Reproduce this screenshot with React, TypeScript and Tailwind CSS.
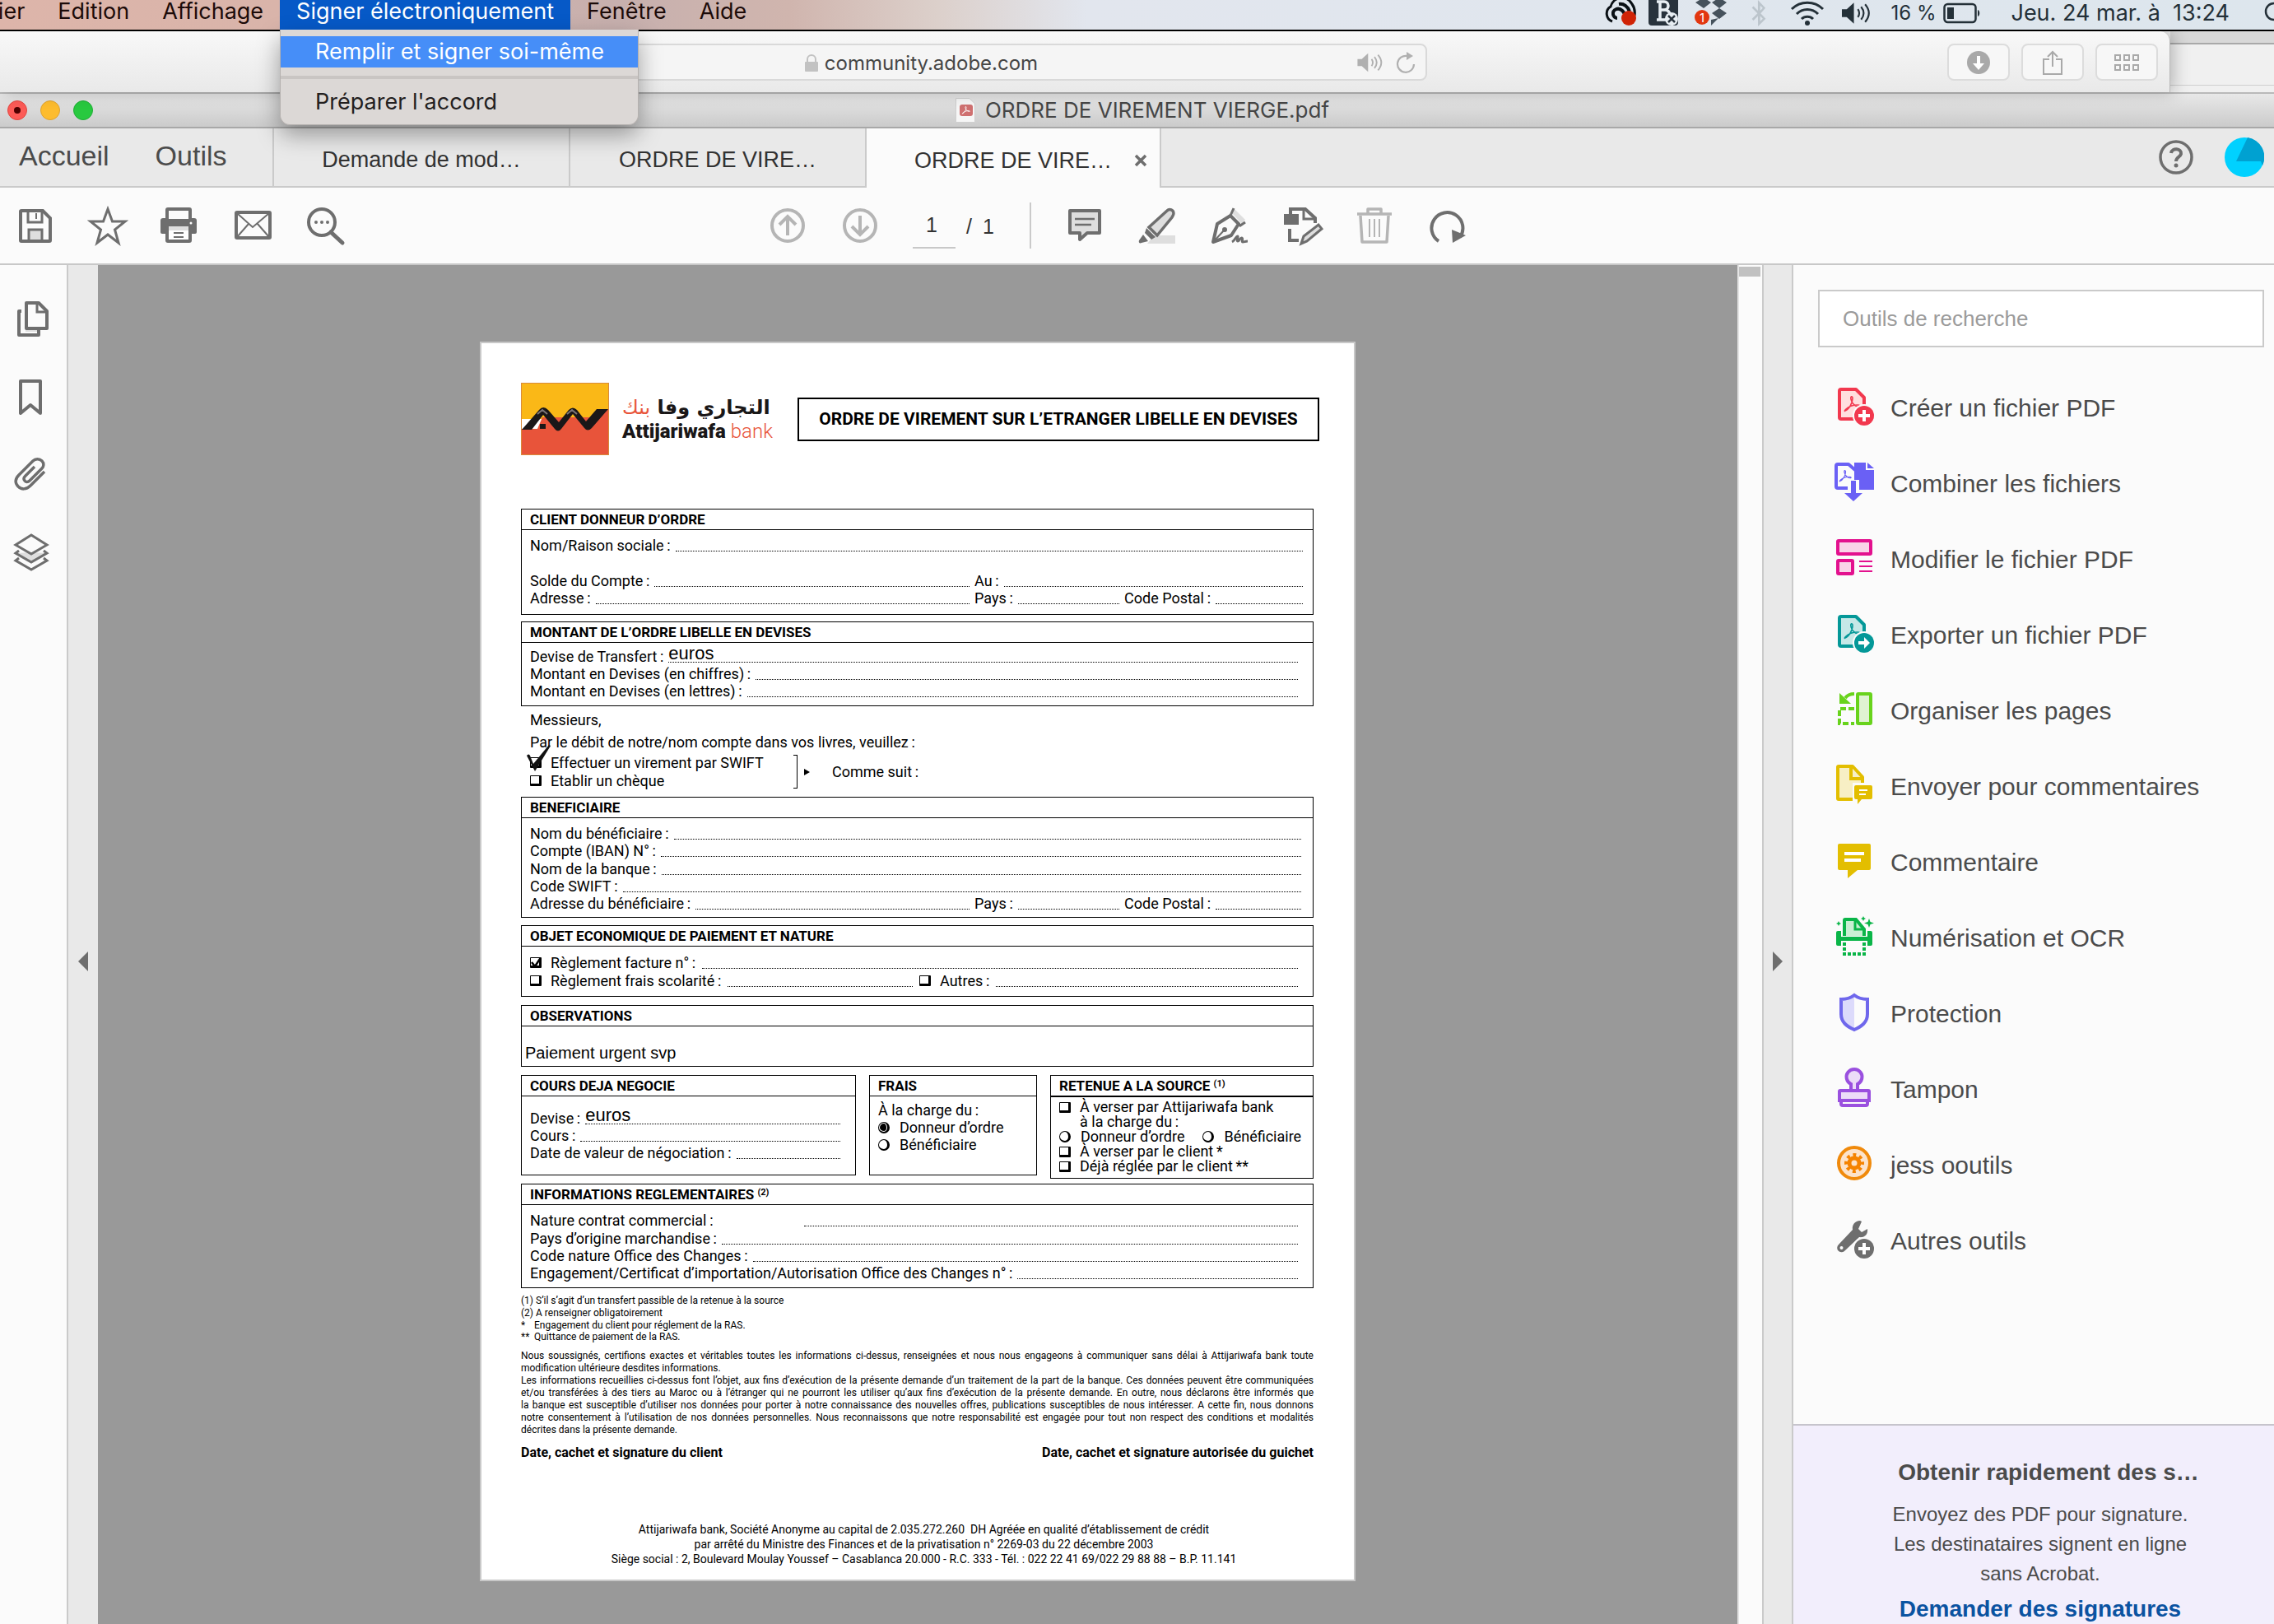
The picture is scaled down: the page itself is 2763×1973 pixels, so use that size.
import { useId, useState } from 'react';
import type { ReactNode } from 'react';
import { FaBluetoothB } from 'react-icons/fa';
import { clsx } from 'clsx';

const GREY = '#6e6e6e';

function AcroGlyph({ color, x = 0, y = 0, scale = 1 }: { color: string; x?: number; y?: number; scale?: number }) {
  return (
    <path
      transform={`translate(${x} ${y}) scale(${scale})`}
      d="M1 18C5 17 10 9 10 3c0-3-3-3-2 1 1 5 5 9 9 9 3 0 2-2-1-2-5 0-11 2-14 5-2 2-2 3-1 2z"
      fill="none"
      stroke={color}
      strokeWidth="1.6"
      strokeLinejoin="round"
    />
  );
}

function Svg({ children, className = 'size-12', box = 48 }: { children: ReactNode; className?: string; box?: number }) {
  return (
    <svg viewBox={`0 0 ${box} ${box}`} className={clsx('shrink-0 overflow-visible', className)} fill="none" aria-hidden="true">
      {children}
    </svg>
  );
}

const tools: { label: string; icon: ReactNode }[] = [
  {
    label: 'Créer un fichier PDF',
    icon: (
      <Svg>
        <path d="M8 2h18l10 10v26H8a2 2 0 0 1-2-2V4a2 2 0 0 1 2-2z" fill="#ffdede" stroke="#f2384e" strokeWidth="4" strokeLinejoin="round" />
        <AcroGlyph color="#f2384e" x={12} y={10} />
        <circle cx="36" cy="34" r="14" fill="#fbfbfb" />
        <circle cx="36" cy="34" r="12" fill="#f2384e" />
        <path d="M36 27v14M29 34h14" stroke="#fff" strokeWidth="4" />
      </Svg>
    ),
  },
  {
    label: 'Combiner les fichiers',
    icon: (
      <Svg>
        <path d="M16 30H4a2 2 0 0 1-2-2V3a2 2 0 0 1 2-2h13l8 7" stroke="#6a60f5" strokeWidth="4" strokeLinejoin="round" />
        <AcroGlyph color="#6a60f5" x={6} y={8} scale={0.75} />
        <path d="M24-1h14v9h10v24H30V20h-6z" fill="#6a60f5" />
        <path d="M40-1v7h8z" fill="#6a60f5" />
        <path d="M20 21h6v15h8L23 46 12 36h8z" fill="#6a60f5" />
      </Svg>
    ),
  },
  {
    label: 'Modifier le fichier PDF',
    icon: (
      <Svg>
        <rect x="4" y="2" width="40" height="16" rx="1" fill="#f9d3e8" stroke="#e3118e" strokeWidth="4" />
        <rect x="4" y="26" width="18" height="16" rx="1" fill="#f9d3e8" stroke="#e3118e" strokeWidth="4" />
        <path d="M30 27h16M30 33h16M30 39h16" stroke="#e3118e" strokeWidth="2" />
      </Svg>
    ),
  },
  {
    label: 'Exporter un fichier PDF',
    icon: (
      <Svg>
        <path d="M8 2h18l10 10v26H8a2 2 0 0 1-2-2V4a2 2 0 0 1 2-2z" fill="#c5e8e7" stroke="#049898" strokeWidth="4" strokeLinejoin="round" />
        <AcroGlyph color="#049898" x={12} y={10} />
        <circle cx="36" cy="34" r="14" fill="#fbfbfb" />
        <circle cx="36" cy="34" r="12" fill="#049898" />
        <path d="M29 32h7v-5l7 7-7 7v-5h-7z" fill="#fff" />
      </Svg>
    ),
  },
  {
    label: 'Organiser les pages',
    icon: (
      <Svg>
        <rect x="28" y="4" width="16" height="36" rx="1" fill="#dff3d2" stroke="#68d31c" strokeWidth="4" />
        <path d="M24 22H6v18h18" stroke="#68d31c" strokeWidth="4" strokeDasharray="7 3" />
        <path d="M24 4c-5 0-8 1-11 5" stroke="#68d31c" strokeWidth="4" />
        <path d="M6 3v13h14z" fill="#68d31c" />
      </Svg>
    ),
  },
  {
    label: 'Envoyer pour commentaires',
    icon: (
      <Svg>
        <path d="M23 40H5a1 1 0 0 1-1-1V1a1 1 0 0 1 1-1h17l12 13v8" fill="#f7efc4" stroke="#e3be00" strokeWidth="4" strokeLinejoin="round" />
        <path d="M20 0v15h14" stroke="#e3be00" strokeWidth="4" />
        <path d="M22 20h26v22H22z" fill="#fbfbfb" />
        <path d="M26 23h18a2 2 0 0 1 2 2v13a2 2 0 0 1-2 2H33l-5 6v-6h-2a2 2 0 0 1-2-2V25a2 2 0 0 1 2-2z" fill="#e3be00" />
        <path d="M30 29h10M30 34h8" stroke="#fff" strokeWidth="2" />
      </Svg>
    ),
  },
  {
    label: 'Commentaire',
    icon: (
      <Svg>
        <path d="M6 2h36a2 2 0 0 1 2 2v28a2 2 0 0 1-2 2H28L16 44V34H6a2 2 0 0 1-2-2V4a2 2 0 0 1 2-2z" fill="#e3be00" />
        <path d="M12 14h24M12 22h20" stroke="#fff" strokeWidth="4" />
      </Svg>
    ),
  },
  {
    label: 'Numérisation et OCR',
    icon: (
      <Svg>
        <path d="M12 22V3a1 1 0 0 1 1-1h13l10 12v8" fill="#c9efd3" stroke="#0ab548" strokeWidth="4" />
        <path d="M25 2v12h11" stroke="#0ab548" strokeWidth="3" />
        <path d="M2 18a2 2 0 0 1 2-2h4v7h32v-7h4a2 2 0 0 1 2 2v14a2 2 0 0 1-2 2h-4v-6H8v6H4a2 2 0 0 1-2-2z" fill="#0ab548" />
        <path d="M12 30v14h24V30" stroke="#0ab548" strokeWidth="4" strokeDasharray="4 2" />
        <path d="m42 1 1.500 4 4.500 1.500-4.500 1.500L42 12l-1.500-4L36 6.500 40.500 5zM5 4l1 2 2 1-2 1-1 2-1-2-2-1 2-1zM35-2l1 2 2 1-2 1-1 2-1-2-2-1 2-1z" fill="#0ab548" />
      </Svg>
    ),
  },
  {
    label: 'Protection',
    icon: (
      <Svg>
        <path d="M24 2C19 6 14 7 8 7v18c0 10 7 15 16 20z" fill="#dcdafb" />
        <path d="M24 2c5 4 10 5 16 5v18c0 10-7 15-16 19-9-4-16-9-16-19V7c6 0 11-1 16-5z" stroke="#6f67ec" strokeWidth="4" />
      </Svg>
    ),
  },
  {
    label: 'Tampon',
    icon: (
      <Svg>
        <path d="M20 26v-8a9.500 9.500 0 1 1 8 0v8" fill="#ecdcf8" stroke="#9a50df" strokeWidth="4" />
        <path d="M8 38v4a2 2 0 0 0 2 2h28a2 2 0 0 0 2-2v-4" stroke="#9a50df" strokeWidth="4" />
        <path d="M6 38V27a1 1 0 0 1 1-1h34a1 1 0 0 1 1 1v11z" fill="#ecdcf8" stroke="#9a50df" strokeWidth="4" />
      </Svg>
    ),
  },
  {
    label: 'jess ooutils',
    icon: (
      <Svg>
        <circle cx="24" cy="22" r="19" fill="#fce3cb" stroke="#f08a0c" strokeWidth="4" />
        <circle cx="24" cy="22" r="6" stroke="#f58300" strokeWidth="5" />
        <circle cx="24" cy="22" r="10" stroke="#f58300" strokeWidth="4" strokeDasharray="3.900 3.954" strokeDashoffset="1.900" />
      </Svg>
    ),
  },
  {
    label: 'Autres outils',
    icon: (
      <Svg>
        <path d="M31 0c-6 0-10 5-9 11L5 29a5 5 0 0 0 7 8l18-17c6 1 11-3 10-10l-7 4-4-4 4-9a9 9 0 0 0-2-1z" fill={GREY} />
        <circle cx="8.500" cy="33" r="2" fill="#fbfbfb" />
        <circle cx="36" cy="34" r="14" fill="#fbfbfb" />
        <circle cx="36" cy="34" r="12" fill={GREY} />
        <path d="M36 27v14M29 34h14" stroke="#fff" strokeWidth="4" />
      </Svg>
    ),
  },
];

const fileActions: { label: string; icon: ReactNode }[] = [
  {
    label: 'Enregistrer',
    icon: (
      <Svg className="size-11" box={44}>
        <path d="M14 27h16v14H14z" fill="#dedede" />
        <path d="M14 41V27h16v14M13 3v15h17V3" stroke={GREY} strokeWidth="3" />
        <path d="M23 7v7" stroke={GREY} strokeWidth="2" />
        <path d="M5 4h26l9 9v27a1 1 0 0 1-1 1H5a1 1 0 0 1-1-1V5a1 1 0 0 1 1-1z" stroke={GREY} strokeWidth="4" />
      </Svg>
    ),
  },
  {
    label: 'Favoris',
    icon: (
      <Svg className="size-11" box={44}>
        <path d="m22 2 5.500 15H43L30.500 27 35 43 22 33 9 43l4.500-16L1 17h15.500z" stroke={GREY} strokeWidth="3" />
      </Svg>
    ),
  },
  {
    label: 'Imprimer',
    icon: (
      <Svg className="size-11" box={44}>
        <g transform="translate(-2 0)">
          <rect x="8" y="2" width="28" height="18" rx="1" stroke={GREY} strokeWidth="4" />
          <path d="M3 13h38a3 3 0 0 1 3 3v14a2 2 0 0 1-2 2H2a2 2 0 0 1-2-2V16a3 3 0 0 1 3-3z" fill={GREY} />
          <path d="M10 4h24v10H10z" fill="#fbfbfb" />
          <rect x="8" y="25" width="28" height="16" rx="1" fill="#fff" stroke={GREY} strokeWidth="4" />
          <path d="M10 23h24v5H10z" fill="#dedede" />
          <path d="M16 31h12M16 36h12" stroke={GREY} strokeWidth="2" />
          <circle cx="37" cy="19" r="1.500" fill="#fff" />
        </g>
      </Svg>
    ),
  },
  {
    label: 'Envoyer par e-mail',
    icon: (
      <Svg className="size-11" box={44}>
        <rect x="2" y="6" width="41" height="31" rx="1" stroke={GREY} strokeWidth="4" />
        <path d="m3 7 19 17L42 7M3 36l14-16M42 36 28 20" stroke={GREY} strokeWidth="2" />
      </Svg>
    ),
  },
  {
    label: 'Rechercher',
    icon: (
      <Svg className="size-11" box={44}>
        <circle cx="18" cy="18" r="16" stroke={GREY} strokeWidth="4" />
        <path d="m29 30 14 13" stroke={GREY} strokeWidth="5" strokeLinecap="round" />
        <circle cx="11" cy="18" r="2" fill={GREY} />
        <circle cx="18" cy="18" r="2" fill={GREY} />
        <circle cx="25" cy="18" r="2" fill={GREY} />
      </Svg>
    ),
  },
];

const editActions: { label: string; icon: ReactNode }[] = [
  {
    label: 'Ajouter un commentaire',
    icon: (
      <Svg className="size-11" box={44}>
        <path d="M4 4h36v27H25l-9 8v-8H4z" fill="#dedede" stroke={GREY} strokeWidth="4" strokeLinejoin="round" />
        <path d="M10 14h24M10 21h20" stroke={GREY} strokeWidth="2.500" />
      </Svg>
    ),
  },
  {
    label: 'Surligner',
    icon: (
      <Svg className="size-11" box={44}>
        <path d="M18 34h26v10H10z" fill="#dedede" />
        <path d="M12 24 34 4c3-3 8-1 8 3 0 2-1 3-2 5L22 34z" fill="#dedede" stroke={GREY} strokeWidth="3.500" />
        <path d="m9 25 11 11-5 3-8-8z" fill={GREY} />
        <path d="M5 33 0 40c-1 3 1 4 3 3l8-2z" fill={GREY} />
      </Svg>
    ),
  },
  {
    label: 'Signer',
    icon: (
      <Svg className="size-11" box={44}>
        <path d="m27 1 14 14-4 5-12-13z" fill="#dedede" />
        <path d="m27 1-4 9 12 12 6-4" stroke={GREY} strokeWidth="3" />
        <path d="M23 10 7 20 2 42l22-8 9-14z" stroke={GREY} strokeWidth="4" strokeLinejoin="round" />
        <path d="m3 41 12-13" stroke={GREY} strokeWidth="2" />
        <circle cx="16" cy="27" r="3" fill={GREY} />
        <path d="M25 42c4-2 5-8 7-7 1 1-2 6 0 6s3-5 5-4-1 5 1 5 3-1 6-1" stroke={GREY} strokeWidth="3" />
      </Svg>
    ),
  },
  {
    label: 'Modifier',
    icon: (
      <Svg className="size-11" box={44}>
        <path d="M8 8V2h18l12 11v6" stroke={GREY} strokeWidth="4" />
        <path d="M24 2v12h13" stroke={GREY} strokeWidth="3" />
        <path d="M0 8h18v13H0z" fill={GREY} />
        <path d="M7 26v14h11" stroke={GREY} strokeWidth="4" />
        <path d="m24 35 18-14 4 5-18 15-7 3z" fill="#dedede" stroke={GREY} strokeWidth="3" />
      </Svg>
    ),
  },
  {
    label: 'Supprimer',
    icon: (
      <Svg className="size-11" box={44}>
        <path d="M1 8h42" stroke="#b5b5b5" strokeWidth="3.500" />
        <path d="M14 7V2h16v5M5 10l2 32h30l2-32" stroke="#b5b5b5" strokeWidth="3.500" strokeLinejoin="round" />
        <path d="M16 14v22M22 14v22M28 14v22" stroke="#b5b5b5" strokeWidth="2" />
      </Svg>
    ),
  },
  {
    label: 'Faire pivoter',
    icon: (
      <Svg className="size-11" box={44}>
        <path d="M12 41A19 19 0 1 1 38 36" stroke={GREY} strokeWidth="4" />
        <path d="m28 27 17 7-16 9z" fill={GREY} />
      </Svg>
    ),
  },
];

const navPanes: { label: string; icon: ReactNode }[] = [
  {
    label: 'Vignettes de page',
    icon: (
      <Svg className="size-11" box={44}>
        <path d="M14 33h16v4H14z" fill="#dedede" />
        <path d="M9 12H6v29h24v-6" stroke={GREY} strokeWidth="4" strokeLinejoin="round" />
        <path d="M15 2h15l10 10v21H15z" stroke={GREY} strokeWidth="4" strokeLinejoin="round" />
        <path d="M28 2v11h12" stroke={GREY} strokeWidth="3" />
      </Svg>
    ),
  },
  {
    label: 'Signets',
    icon: (
      <Svg className="size-11" box={44}>
        <path d="M8 2h24v39L20 31 8 41z" stroke={GREY} strokeWidth="4" strokeLinejoin="round" />
      </Svg>
    ),
  },
  {
    label: 'Pièces jointes',
    icon: (
      <Svg className="size-11" box={44}>
        <path
          d="M37 17 20 34c-5 5-11 5-15 1s-4-9 1-14L23 4c3-3 8-3 11 0s2 7 0 9L19 28c-2 2-5 2-6 0-2-2-1-4 1-6l11-11"
          stroke={GREY}
          strokeWidth="3.500"
        />
      </Svg>
    ),
  },
  {
    label: 'Calques',
    icon: (
      <Svg className="size-11" box={44}>
        <g transform="translate(-1 -2)">
          <path d="m22 22 18 1-18 12L4 23z" fill="#dedede" />
          <path d="m22 1 19 12-19 11L3 13z" fill="#fbfbfb" stroke={GREY} strokeWidth="3" />
          <path d="m7 20-4 3 19 11 19-11-4-3M7 29l-4 3 19 11 19-11-4-3" stroke={GREY} strokeWidth="3" />
        </g>
      </Svg>
    ),
  },
];

function SpeakerIcon({ className }: { className?: string }) {
  return (
    <svg viewBox="0 0 36 28" className={clsx('shrink-0', className)} fill="none" aria-hidden="true">
      <path d="M1 9h6l9-8v26l-9-8H1z" fill="currentColor" />
      <path d="M21 9c2 3 2 7 0 10M25 6c4 5 4 11 0 16M30 3c6 7 6 15 0 22" stroke="currentColor" strokeWidth="2.200" />
    </svg>
  );
}

function MenuBar() {
  const item = 'h-9 px-5 pb-2 text-[27px] leading-[28px] whitespace-nowrap';
  return (
    <header className="relative z-20 flex h-[38px] items-start border-b-2 border-black bg-[linear-gradient(90deg,#ddb5aa_0px,#d9b4aa_340px,#c7b0ae_750px,#d0b5ae_960px,#dcd0cb_1140px,#e2e6ee_1320px,#dde6ed_100%)]">
      <nav className="-ml-[76px] flex h-9 text-[#1c0b09]">
        <button className={item}>Fichier</button>
        <button className={item}>Edition</button>
        <button className={item}>Affichage</button>
        <div className="relative">
          <button className={clsx(item, 'bg-[#0659c7] text-white')}>Signer électroniquement</button>
          <div
            role="menu"
            className="absolute top-9 left-0 w-[436px] rounded-b-xl border border-t-0 border-[#b5b1af] bg-[#dcd8d6] pt-2 pb-2 text-[27px] text-[#232020] shadow-[0_12px_28px_rgba(0,0,0,0.35)]"
          >
            <button role="menuitem" className="block h-[38px] w-full bg-[#468ef8] px-[42px] text-left leading-[36px] whitespace-nowrap text-white">
              Remplir et signer soi-même
            </button>
            <div className="mt-[10px] h-1 bg-[#c9c5c3]" />
            <button role="menuitem" className="mt-[9px] block h-[38px] w-full px-[42px] text-left leading-[38px]">
              Préparer l'accord
            </button>
          </div>
        </div>
        <button className={item}>Fenêtre</button>
        <button className={item}>Aide</button>
      </nav>
      <div className="ml-auto flex h-8 items-center text-[#243038]">
        <svg viewBox="0 0 44 32" className="mr-3 h-8 w-11" fill="none" aria-hidden="true">
          <path d="M12 26a10 10 0 0 1-2-18A14 14 0 0 1 36 5c3 4 4 8 3 14" stroke="#0a1015" strokeWidth="3" />
          <path d="M18 22c-5 0-8-8-1-11 6-2 9 4 13 11M20 5c6-1 11 3 13 9" stroke="#0a1015" strokeWidth="4" />
          <circle cx="32" cy="22" r="9" fill="#d02306" />
        </svg>
        <svg viewBox="0 0 36 32" className="mr-5 h-8 w-9" fill="none" aria-hidden="true">
          <rect y="-4" width="36" height="35" rx="4" fill="#28323c" />
          <path d="M10 2h9a5 5 0 0 1 0 10h-5 6a6 6 0 0 1 0 12H10M14 2v22" stroke="#e8eef3" strokeWidth="3.500" />
          <circle cx="28" cy="23" r="8" fill="#e8eef3" />
          <path d="m24 19 8 8m0-8-8 8" stroke="#28323c" strokeWidth="2.500" />
        </svg>
        <svg viewBox="0 0 40 32" className="mr-7 h-8 w-10" fill="none" aria-hidden="true">
          <path d="m11-3 9 6-9 7-10-7zM30-3l9 6-9 7-9-7zM30 10l9 6-9 7-9-7zM20 24l9-2-9 9z" fill="#46525c" />
          <circle cx="9" cy="21" r="9" fill="#e2360f" />
          <text x="9" y="27" textAnchor="middle" fontSize="15" fill="#fff" fontFamily="Inter, sans-serif">
            1
          </text>
        </svg>
        <FaBluetoothB className="mr-7 h-8 w-5 text-[#bcc5cc]" />
        <svg viewBox="0 0 42 30" className="mr-5 h-[30px] w-[42px]" fill="none" aria-hidden="true">
          <path d="M2 10a27 27 0 0 1 38 0M8 16a18 18 0 0 1 26 0M14 22a10 10 0 0 1 14 0" stroke="currentColor" strokeWidth="3" />
          <circle cx="21" cy="27" r="3" fill="currentColor" />
        </svg>
        <SpeakerIcon className="mr-[26px] h-7 w-[35px]" />
        <span className="mr-[9px] text-[24px] leading-[28px] whitespace-nowrap">16 %</span>
        <svg viewBox="0 0 46 26" className="mr-9 h-[26px] w-[46px]" fill="none" aria-hidden="true">
          <rect x="1.500" y="2" width="38" height="22" rx="4" stroke="currentColor" strokeWidth="2.500" />
          <rect x="5" y="6" width="8" height="14" fill="currentColor" />
          <path d="M42 9c3 1 3 7 0 8z" fill="currentColor" />
        </svg>
        <span className="mr-[42px] text-[27px] leading-[28px] whitespace-pre">Jeu. 24 mar. à{'  '}13:24</span>
        <svg viewBox="0 0 12 28" className="h-7 w-3" fill="none" aria-hidden="true">
          <circle cx="12" cy="12" r="10" stroke="currentColor" strokeWidth="2.500" />
        </svg>
      </div>
    </header>
  );
}

function BrowserBar() {
  const button = 'flex h-[45px] w-[76px] items-center justify-center rounded-lg border-2 border-[#dcdcdc] bg-[#f7f7f7] text-[#a9a9a9]';
  return (
    <div className="flex h-[74px] bg-[#f0f0f0]">
      <div className="z-10 flex flex-1 items-start rounded-tr-xl border-r border-[#b9b9b9] bg-linear-to-b from-[#f8f8f8] to-[#e9e9e9] pt-[15px] pr-[14px] shadow-[4px_0_20px_rgba(0,0,0,0.25)]">
        <div className="ml-[501px] flex h-[45px] w-[1233px] items-center rounded-lg border-2 border-[#d9d9d9] bg-[#f5f5f5] pr-3 text-[#b0b0b0]">
          <div className="flex flex-1 items-center justify-center gap-2 pt-[2px] pl-[88px] text-[#464646]">
            <svg viewBox="0 0 16 22" className="h-[22px] w-4" fill="none" aria-hidden="true">
              <path d="M3 10V6a5 5 0 0 1 10 0v4" stroke="#c2c2c2" strokeWidth="2" />
              <rect y="9" width="16" height="12" rx="1" fill="#c2c2c2" />
            </svg>
            <span className="text-[24px] leading-[28px]">community.adobe.com</span>
          </div>
          <SpeakerIcon className="mr-4 h-6 w-8" />
          <svg viewBox="0 0 24 26" className="h-[26px] w-6" fill="none" aria-hidden="true">
            <path d="M14 5A10 10 0 1 0 22 15" stroke="currentColor" strokeWidth="2.200" />
            <path d="m13 0 8 5-8 5z" fill="currentColor" />
          </svg>
        </div>
        <div className="ml-auto flex gap-[14px]">
          <button className={button} aria-label="Téléchargements">
            <svg viewBox="0 0 28 28" className="size-7" aria-hidden="true">
              <circle cx="14" cy="14" r="14" fill="currentColor" />
              <path d="M12 6h4v9h5l-7 8-7-8h5z" fill="#fff" />
            </svg>
          </button>
          <button className={button} aria-label="Partager">
            <svg viewBox="0 0 24 30" className="h-[30px] w-6" fill="none" stroke="currentColor" strokeWidth="2" aria-hidden="true">
              <path d="M8 11H1v18h22V11h-7M12 20V2M6 8l6-6 6 6" />
            </svg>
          </button>
          <button className={button} aria-label="Onglets">
            <svg viewBox="0 0 30 20" className="h-5 w-[30px]" fill="none" stroke="currentColor" strokeWidth="2" aria-hidden="true">
              <path d="M1 1h6v6H1zM12 1h6v6h-6zM23 1h6v6h-6zM1 13h6v6H1zM12 13h6v6h-6zM23 13h6v6h-6z" />
            </svg>
          </button>
        </div>
      </div>
      <div className="w-[126px]">
        <div className="h-4 border-b-2 border-[#a9a9a9] bg-[#d8d8d8]" />
        <div className="h-[50px] border-b border-[#cfcfcf]" />
      </div>
    </div>
  );
}

function TitleBar() {
  return (
    <div className="flex h-11 items-center border-t-2 border-b-2 border-t-[#b9b9b9] border-b-[#a8a8a8] bg-linear-to-b from-[#e8e8e8] to-[#cbcbcb] pl-[9px]">
      <div className="flex gap-4">
        <button aria-label="Fermer" className="flex size-6 items-center justify-center rounded-full border border-[#e2463f] bg-[#fc5b57]">
          <span className="size-2 rounded-full bg-[#4d0000]" />
        </button>
        <button aria-label="Réduire" className="size-6 rounded-full border border-[#e0a32e] bg-[#fdbc2e]" />
        <button aria-label="Agrandir" className="size-6 rounded-full border border-[#1fae35] bg-[#28c93f]" />
      </div>
      <div className="flex flex-1 items-center justify-center gap-3 pr-[100px] text-[#464646]">
        <svg viewBox="0 0 24 30" className="h-[30px] w-6" fill="none" aria-hidden="true">
          <path d="M.5.5H17l6.500 6.500v22.500H.5z" fill="#f6f6f6" stroke="#cfcfcf" />
          <rect x="5" y="8" width="16" height="14" rx="3" fill="#cf7070" />
          <AcroGlyph color="#fff" x={8} y={10} scale={0.5} />
        </svg>
        <span className="text-[26px] leading-[30px]">ORDRE DE VIREMENT VIERGE.pdf</span>
      </div>
    </div>
  );
}

const openTabs = ['Demande de mod…', 'ORDRE DE VIRE…', 'ORDRE DE VIRE…'];

function TabStrip() {
  const [active, setActive] = useState(2);
  return (
    <div className="flex h-[72px] bg-[#e9e9e9] text-[#4b4b4b]">
      <div className="flex w-[331px] items-center gap-[56px] border-b-2 border-[#cacaca] pb-1 pl-[23px] text-[34px]">
        <button>Accueil</button>
        <button>Outils</button>
      </div>
      {openTabs.map((name, i) => (
        <div
          key={i}
          className={clsx(
            'relative flex w-[360px] items-center justify-center border-l-2 border-[#cacaca] pt-[6px] text-[27px] text-[#323232]',
            i === active ? 'border-r-2 bg-[#fbfbfb]' : 'border-b-2',
          )}
        >
          <button onClick={() => setActive(i)}>{name}</button>
          {i === active && (
            <button aria-label="Fermer l'onglet" className="absolute right-[15px] text-[#6e6e6e]">
              <svg viewBox="0 0 16 16" className="size-4" stroke="currentColor" strokeWidth="3.500" aria-hidden="true">
                <path d="m2 2 12 12M14 2 2 14" />
              </svg>
            </button>
          )}
        </div>
      ))}
      <div className="flex flex-1 items-center justify-end gap-[38px] border-b-2 border-[#cacaca] pr-3">
        <button aria-label="Aide">
          <svg viewBox="0 0 42 42" className="size-[42px]" fill="none" stroke={GREY} aria-hidden="true">
            <circle cx="21" cy="21" r="19" strokeWidth="3.500" />
            <path d="M15 16c1-7 13-6 12 1-1 4-6 4-6 9" strokeWidth="4" />
            <circle cx="21" cy="31" r="2.500" fill={GREY} stroke="none" />
          </svg>
        </button>
        <button aria-label="Compte">
          <svg viewBox="0 0 48 48" className="size-12" aria-hidden="true">
            <circle cx="24" cy="24" r="24" fill="#00d1ff" />
            <path d="M28 0a24 24 0 0 1 18 34l-2-5H14z" fill="#00a1d1" />
          </svg>
        </button>
      </div>
    </div>
  );
}

function Toolbar() {
  return (
    <div className="flex h-[94px] items-center border-b-2 border-[#c8c8c8] bg-[#fbfbfb] pl-[21px]">
      <div className="flex w-[914px] gap-11">
        {fileActions.map((a) => (
          <button key={a.label} aria-label={a.label}>
            {a.icon}
          </button>
        ))}
      </div>
      <div className="flex gap-11">
        <button aria-label="Page précédente">
          <Svg className="size-11" box={44}>
            <circle cx="22" cy="22" r="19" stroke="#b5b5b5" strokeWidth="4" />
            <path d="M22 34V12m-10 9 10-10 10 10" stroke="#b5b5b5" strokeWidth="4" />
          </Svg>
        </button>
        <button aria-label="Page suivante">
          <Svg className="size-11" box={44}>
            <circle cx="22" cy="22" r="19" stroke="#b5b5b5" strokeWidth="4" />
            <path d="M22 10v22m-10-9 10 10 10-10" stroke="#b5b5b5" strokeWidth="4" />
          </Svg>
        </button>
      </div>
      <div className="ml-[42px] flex h-14 text-[25px] text-[#323232]">
        <input
          aria-label="Numéro de page"
          defaultValue="1"
          className="h-14 w-[52px] border-b-2 border-[#c8c8c8] bg-transparent px-4"
        />
        <span className="ml-[13px] flex items-center gap-[13px] pt-1">
          <span>/</span>
          <span>1</span>
        </span>
      </div>
      <div className="ml-[43px] h-14 w-[2px] bg-[#cacaca]" />
      <div className="ml-[43px] flex gap-11">
        {editActions.map((a) => (
          <button key={a.label} aria-label={a.label}>
            {a.icon}
          </button>
        ))}
      </div>
    </div>
  );
}

/* ---------- PDF form ---------- */

type FieldProps = { label: string; value?: string; className?: string; lineClassName?: string };

function Field({ label, value, className = 'flex-1', lineClassName }: FieldProps) {
  const id = useId();
  return (
    <div className={clsx('flex h-[21px] min-w-0', className)}>
      <label htmlFor={id} className="pr-[6px] whitespace-nowrap">
        {label}
      </label>
      <input
        id={id}
        defaultValue={value}
        className={clsx(
          'h-[18px] min-w-0 flex-1 border-b border-dotted border-black bg-transparent pb-[3px] font-["Liberation_Sans",Arial,sans-serif] text-[22px] leading-[18px]',
          lineClassName,
        )}
      />
    </div>
  );
}

function Check({ label, checked, hideMark }: { label: ReactNode; checked?: boolean; hideMark?: boolean }) {
  const id = useId();
  return (
    <span className="relative flex items-center whitespace-nowrap">
      <input
        id={id}
        type="checkbox"
        defaultChecked={checked}
        className="peer h-[13px] w-[14px] shrink-0 appearance-none rounded-[1px] border border-r-[3px] border-b-[3px] border-black"
      />
      {!hideMark && (
        <svg viewBox="0 0 14 13" className="pointer-events-none absolute left-0 hidden h-[13px] w-[14px] peer-checked:block" fill="none" aria-hidden="true">
          <path d="m2 6 4 5 6-9" stroke="#000" strokeWidth="2.500" />
        </svg>
      )}
      <label htmlFor={id} className="pl-[11px]">
        {label}
      </label>
    </span>
  );
}

function Radio({ label, name, checked }: { label: string; name: string; checked?: boolean }) {
  const id = useId();
  return (
    <span className="flex items-center whitespace-nowrap">
      <input
        id={id}
        type="radio"
        name={name}
        defaultChecked={checked}
        className="size-[14px] shrink-0 appearance-none rounded-full border border-r-[3px] border-b-2 border-black checked:bg-black checked:bg-clip-content checked:p-px"
      />
      <label htmlFor={id} className="pl-[12px]">
        {label}
      </label>
    </span>
  );
}

function Section({ title, className, bodyClassName, children }: { title: ReactNode; className?: string; bodyClassName?: string; children: ReactNode }) {
  return (
    <section className={clsx('border border-black', className)}>
      <h2 className="h-[25px] border-b border-black pl-[10px] text-[17px] leading-[25px] font-bold whitespace-nowrap">{title}</h2>
      <div className={clsx('pl-[10px]', bodyClassName)}>{children}</div>
    </section>
  );
}

const legalLines = [
  ['Nous soussignés, certifions exactes et véritables toutes les informations ci-dessus, renseignées et nous nous engageons à communiquer sans délai à Attijariwafa bank toute', true],
  ['modification ultérieure desdites informations.', false],
  ['Les informations recueillies ci-dessus font l’objet, aux fins d’exécution de la présente demande d’un traitement de la part de la banque. Ces données peuvent être communiquées', true],
  ['et/ou transférées à des tiers au Maroc ou à l’étranger qui ne pourront les utiliser qu’aux fins d’exécution de la présente demande. En outre, nous déclarons être informés que', true],
  ['la banque est susceptible d’utiliser nos données pour porter à notre connaissance des nouvelles offres, publications susceptibles de nous intéresser. A cette fin, nous donnons', true],
  ['notre consentement à l’utilisation de nos données personnelles. Nous reconnaissons que notre responsabilité est engagée pour tout non respect des conditions et modalités', true],
  ['décrites dans la présente demande.', false],
] as const;

function AddressRow({ label }: { label: string }) {
  return (
    <div className="flex gap-[6px]">
      <Field label={label} className="w-[534px]" />
      <Field label="Pays&thinsp;:" className="w-[176px]" />
      <Field label="Code Postal&thinsp;:" />
    </div>
  );
}

function PdfPage() {
  return (
    <article className="mx-auto mt-[93px] flex h-[1506px] w-[1064px] shrink-0 flex-col border-2 border-[#c8c8c8] bg-white pt-12 pr-[49px] pl-12 font-[Roboto,sans-serif] text-[18px] leading-[21px] text-black">
      <div className="-mr-[7px] flex items-center">
        <svg viewBox="0 0 107 88" className="h-[88px] w-[107px]" aria-hidden="true">
          <path d="M0 0h107v44H0z" fill="#fab817" />
          <path d="M0 56h20l6-14h70l11-8v54H0z" fill="#e8543a" />
          <path d="M92 32h15v40H80z" fill="#e8543a" />
          <path
            d="M1 57h12l14-18 14 17q4 5 8 0l14-18 14 17q4 5 9 0l20-23H92L79 47 68 33q-5-5-10 0L46 48 33 33q-6-6-11 0z"
            fill="#1a1718"
          />
          <path d="M23 50h7v6h-7z" fill="#1a1718" />
          <path d="m20 38 6-5 6 5M56 38l6-5 6 5" fill="none" stroke="#7c7679" strokeWidth="2" />
          <rect x=".5" y=".5" width="106" height="87" fill="none" stroke="#d98a3a" strokeWidth="1" />
        </svg>
        <div className="ml-4 flex w-[180px] flex-col items-start">
          <p dir="rtl" className='font-["DejaVu_Sans",sans-serif] text-[24px] leading-[30px] font-bold whitespace-nowrap text-[#1a1718]'>
            التجاري وفا <span className="font-normal text-[#e8543a]">بنك</span>
          </p>
          <p className="text-[24px] leading-[28px] font-black whitespace-nowrap text-[#1a1718]">
            Attijariwafa <span className="font-light text-[#e8543a]">bank</span>
          </p>
        </div>
        <h1 className="ml-[33px] flex h-[53px] flex-1 items-center justify-center border-2 border-black text-[21px] font-bold whitespace-nowrap">
          ORDRE DE VIREMENT SUR L’ETRANGER LIBELLE EN DEVISES
        </h1>
      </div>

      <Section title="CLIENT DONNEUR D’ORDRE" className="mt-[65px]" bodyClassName="pt-2 pr-3 pb-[9px]">
        <Field label="Nom/Raison sociale&thinsp;:" className="mb-[22px]" />
        <div className="flex gap-[6px]">
          <Field label="Solde du Compte&thinsp;:" className="w-[534px]" />
          <Field label="Au&thinsp;:" />
        </div>
        <AddressRow label="Adresse&thinsp;:" />
      </Section>

      <Section title="MONTANT DE L’ORDRE LIBELLE EN DEVISES" className="mt-2" bodyClassName="pt-[6px] pr-[18px] pb-[7px]">
        <Field label="Devise de Transfert&thinsp;:" value="euros" />
        <Field label="Montant en Devises (en chiffres)&thinsp;:" />
        <Field label="Montant en Devises (en lettres)&thinsp;:" />
      </Section>

      <div className="pt-[6px] pl-[11px]">
        <p>Messieurs,</p>
        <p className="mt-[6px]">Par le débit de notre/nom compte dans vos livres, veuillez&thinsp;:</p>
        <div className="mt-1 flex items-center">
          <div className="relative flex w-[320px] flex-col gap-px">
            <Check label="Effectuer un virement par SWIFT" checked hideMark />
            <Check label="Etablir un chèque" />
            <svg viewBox="0 0 30 34" className="pointer-events-none absolute -top-3 -left-1 h-[34px] w-[30px]" aria-hidden="true">
              <path d="M0 14c2-2 3-2 4 0l4 10L27 1l2 1L10 33z" fill="#111" />
            </svg>
          </div>
          <div className="h-[41px] w-[5px] border border-l-0 border-black" />
          <svg viewBox="0 0 7 8" className="ml-2 h-2 w-[7px]" aria-hidden="true">
            <path d="M0 0l7 4-7 4z" />
          </svg>
          <p className="ml-[27px]">Comme suit&thinsp;:</p>
        </div>
      </div>

      <Section title="BENEFICIAIRE" className="mt-[9px]" bodyClassName="pt-2 pr-[14px] pb-[6px]">
        <Field label="Nom du bénéficiaire&thinsp;:" />
        <Field label="Compte (IBAN) N°&thinsp;:" />
        <Field label="Nom de la banque&thinsp;:" className="mt-px" />
        <Field label="Code SWIFT&thinsp;:" />
        <AddressRow label="Adresse du bénéficiaire&thinsp;:" />
      </Section>

      <Section title="OBJET ECONOMIQUE DE PAIEMENT ET NATURE" className="mt-[9px]" bodyClassName="pt-[9px] pr-[18px] pb-2">
        <div className="flex gap-2">
          <Check label="Règlement facture n°&thinsp;:" checked />
          <input aria-label="Numéro de facture" className="h-[18px] flex-1 border-b border-dotted border-black" />
        </div>
        <div className="mt-px flex">
          <div className="flex w-[473px] gap-2 pr-2">
            <Check label="Règlement frais scolarité&thinsp;:" />
            <input aria-label="Frais de scolarité" className="h-[18px] min-w-0 flex-1 border-b border-dotted border-black" />
          </div>
          <Check label="Autres&thinsp;:" />
          <input aria-label="Autres" className="ml-2 h-[18px] flex-1 border-b border-dotted border-black" />
        </div>
      </Section>

      <Section title="OBSERVATIONS" className="mt-[10px]" bodyClassName="pr-1 -ml-[6px]">
        <input
          aria-label="Observations"
          defaultValue="Paiement urgent svp"
          className='mt-5 mb-1 block h-6 w-full font-["Liberation_Sans",Arial,sans-serif] text-[20px]'
        />
      </Section>

      <div className="mt-[10px] flex items-start">
        <Section title="COURS DEJA NEGOCIE" className="w-[407px]" bodyClassName="h-[95px] pt-4 pr-[18px]">
          <Field label="Devise&thinsp;:" value="euros" />
          <Field label="Cours&thinsp;:" />
          <Field label="Date de valeur de négociation&thinsp;:" />
        </Section>
        <Section title="FRAIS" className="ml-[16px] w-[204px]" bodyClassName="h-[95px] pt-[6px]">
          <p>À la charge du&thinsp;:</p>
          <Radio name="frais" label="Donneur d’ordre" checked />
          <Radio name="frais" label="Bénéficiaire" />
        </Section>
        <Section
          title={
            <>
              RETENUE A LA SOURCE <sup className="text-[11px]">(1)</sup>
            </>
          }
          className="ml-4 flex-1"
          bodyClassName="h-[99px] border-t border-black pt-[3px] leading-[18px]"
        >
          <Check label="À verser par Attijariwafa bank" />
          <p className="pl-[25px]">à la charge du&thinsp;:</p>
          <div className="flex gap-[22px]">
            <Radio name="retenue" label="Donneur d’ordre" />
            <Radio name="retenue" label="Bénéficiaire" />
          </div>
          <Check label="À verser par le client&thinsp;*" />
          <Check label="Déjà réglée par le client&thinsp;**" />
        </Section>
      </div>

      <Section
        title={
          <>
            INFORMATIONS REGLEMENTAIRES <sup className="text-[11px]">(2)</sup>
          </>
        }
        className="mt-[6px]"
        bodyClassName="pt-2 pr-[18px] pb-[7px]"
      >
        <Field label="Nature contrat commercial&thinsp;:" lineClassName="ml-[104px]" />
        <Field label="Pays d’origine marchandise&thinsp;:" className="mt-px" />
        <Field label="Code nature Office des Changes&thinsp;:" />
        <Field label="Engagement/Certificat d’importation/Autorisation Office des Changes n°&thinsp;:" />
      </Section>

      <div className="mt-2 text-[12px] leading-[15px]">
        <p>(1) S’il s’agit d’un transfert passible de la retenue à la source</p>
        <p>(2) A renseigner obligatoirement</p>
        <p className="flex leading-[14px]">
          <span className="w-4">*</span>Engagement du client pour réglement de la RAS.
        </p>
        <p className="flex leading-[14px]">
          <span className="w-4">**</span>Quittance de paiement de la RAS.
        </p>
      </div>

      <div className="mt-[9px] text-[12px] leading-[15px]">
        {legalLines.map(([line, full]) => (
          <p key={line} className={clsx('whitespace-nowrap', full && '[text-align-last:justify]')}>
            {line}
          </p>
        ))}
      </div>

      <div className="mt-[9px] flex justify-between text-[16px] font-bold">
        <p>Date, cachet et signature du client</p>
        <p>Date, cachet et signature autorisée du guichet</p>
      </div>

      <footer className="mt-[74px] pl-4 text-center text-[14px] leading-[18px] whitespace-pre">
        <p>Attijariwafa bank, Société Anonyme au capital de 2.035.272.260{'  '}DH Agréée en qualité d’établissement de crédit</p>
        <p>par arrêté du Ministre des Finances et de la privatisation n° 2269-03 du 22 décembre 2003</p>
        <p>Siège social : 2, Boulevard Moulay Youssef – Casablanca 20.000 - R.C. 333 - Tél. : 022 22 41 69/022 29 88 88 – B.P. 11.141</p>
      </footer>
    </article>
  );
}

function ToolsPanel() {
  return (
    <aside className="flex w-[586px] shrink-0 flex-col border-l-2 border-[#cacaca] bg-[#fbfbfb] text-[#4b4b4b]">
      <div className="pt-[30px] pr-3 pl-[30px]">
        <input
          aria-label="Outils de recherche"
          placeholder="Outils de recherche"
          className="h-[70px] w-full border-2 border-[#cacaca] bg-white px-7 text-[26px] placeholder:text-[#9b9b9b]"
        />
      </div>
      <ul className="mt-[27px] pl-[50px]">
        {tools.map((tool) => (
          <li key={tool.label}>
            <button className="flex h-[92px] w-full items-center gap-5 text-left text-[30px] whitespace-nowrap">
              {tool.icon}
              {tool.label}
            </button>
          </li>
        ))}
      </ul>
      <div className="mt-auto h-[243px] border-t-2 border-[#c6c4cc] bg-[#f2eefc] pt-[39px] pl-4 text-center">
        <h3 className="pl-5 text-[28px] leading-9 font-bold">Obtenir rapidement des s…</h3>
        <p className="mx-auto mt-[15px] w-[380px] text-[24px] leading-9">
          Envoyez des PDF pour signature. Les destinataires signent en ligne sans Acrobat.
        </p>
        <a href="#signatures" className="mt-[7px] block text-[28px] leading-9 font-bold text-[#0b53a1]">
          Demander des signatures
        </a>
      </div>
    </aside>
  );
}

export default function App() {
  return (
    <div className="flex h-screen flex-col overflow-hidden bg-[#fbfbfb]">
      <div className="font-[Inter,sans-serif]">
        <MenuBar />
        <BrowserBar />
        <TitleBar />
      </div>
      <div className='flex min-h-0 flex-1 flex-col font-["Liberation_Sans",Arial,sans-serif]'>
        <TabStrip />
        <Toolbar />
        <div className="flex min-h-0 flex-1">
          <nav className="flex w-[83px] shrink-0 flex-col gap-[51px] border-r-2 border-[#cacaca] pt-11 pl-[17px]">
            {navPanes.map((p) => (
              <button key={p.label} aria-label={p.label} className="w-11">
                {p.icon}
              </button>
            ))}
          </nav>
          <button aria-label="Masquer le volet de navigation" className="flex w-9 shrink-0 items-center justify-center bg-[#e9e9e9] pt-10">
            <svg viewBox="0 0 12 24" className="h-6 w-3" aria-hidden="true">
              <path d="M12 0v24L0 12z" fill={GREY} />
            </svg>
          </button>
          <main className="flex min-w-0 flex-1 flex-col overflow-hidden bg-[#999]">
            <PdfPage />
          </main>
          <div className="w-8 shrink-0 border-r-2 border-l-2 border-r-[#cacaca] border-l-[#e4e4e4] bg-[#fbfbfb] pt-[2px]">
            <div className="h-3 w-[26px] bg-[#c1c1c1]" />
          </div>
          <button aria-label="Masquer le volet des outils" className="flex w-[34px] shrink-0 items-center justify-center bg-[#e9e9e9] pt-10">
            <svg viewBox="0 0 12 24" className="h-6 w-3" aria-hidden="true">
              <path d="M0 0v24l12-12z" fill={GREY} />
            </svg>
          </button>
          <ToolsPanel />
        </div>
      </div>
    </div>
  );
}
